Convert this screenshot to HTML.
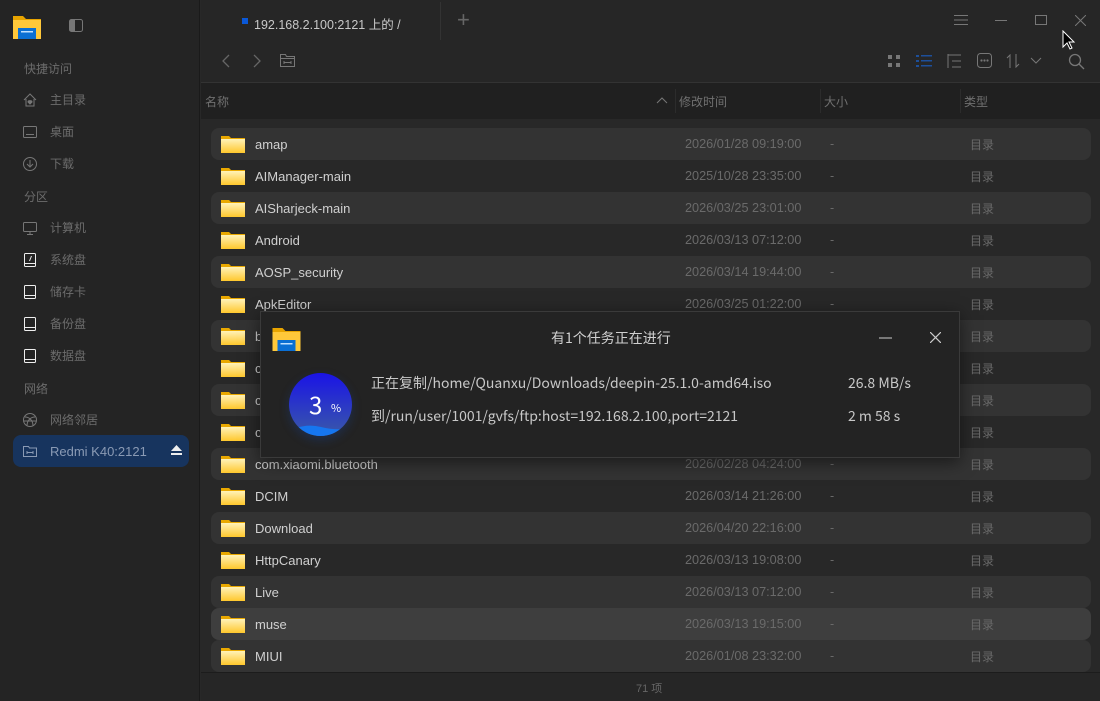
<!DOCTYPE html>
<html><head><meta charset="utf-8"><style>
*{margin:0;padding:0;box-sizing:border-box}
body{width:1100px;height:701px;overflow:hidden;background:#282828;font-family:"Liberation Sans","Noto Sans CJK SC",sans-serif;position:relative;color:#c8c8c8}
.side{position:absolute;left:0;top:0;width:200px;height:701px;background:#242424;border-right:1px solid #1a1a1a}
.sec{position:absolute;left:24px;font-size:12px;color:#6c6c6c}
.it{position:absolute;left:22px;font-size:12px;color:#6c6c6c;display:flex;align-items:center}
.it svg{margin-right:12px}
.abs{position:absolute}
.hdr{position:absolute;left:201px;top:82px;width:899px;height:37px;background:#202020;border-top:1px solid #333;font-size:12px;color:#707070}
.row{position:absolute;left:211px;width:880px;height:32px;border-radius:8px;font-size:12.5px}
.row.s{background:#333}
.row.h{background:#3e3e3e}
.fold{position:absolute;left:10px;top:7px;width:24px;height:18px}
.nm{position:absolute;left:44px;top:9px;color:#d0d0d0;font-size:13px}
.dt{position:absolute;left:474px;top:9px;color:#6a6a6a;font-size:12.7px}
.sz{position:absolute;left:619px;top:9px;color:#6a6a6a}
.tp{position:absolute;left:759px;top:8px;color:#6a6a6a;font-size:12px}
.dl{font-family:"Noto Sans CJK SC","Liberation Sans",sans-serif;line-height:1}
</style></head><body>
<div class="side">
 <svg class="abs" style="left:13px;top:14px" width="28" height="25" viewBox="0 0 28 25"><path d="M0 2h10l3 3h15v20H0z" fill="#e8a400"/><rect x="0" y="6" width="28" height="19" fill="#ffc83a"/><rect x="5" y="14" width="18" height="11" fill="#0a6fd4"/><rect x="8" y="17" width="12" height="1.5" fill="#bfe0ff"/></svg>
 <svg class="abs" style="left:69px;top:19px" width="14" height="13"><rect x="0.5" y="0.5" width="13" height="12" rx="2" fill="none" stroke="#777"/><rect x="1" y="1" width="5" height="11" fill="#777"/></svg>
 <div class="sec" style="top:60px">快捷访问</div>
 <div class="it" style="top:91px"><svg width="16" height="16" viewBox="0 0 16 16" fill="none" stroke="#777"><path d="M2 8l6-6 6 6M4 7v7h8V7"/><path d="M8 12l-2-2a1.2 1.2 0 0 1 2-1 1.2 1.2 0 0 1 2 1z" fill="#777"/></svg>主目录</div>
 <div class="it" style="top:123px"><svg width="16" height="16" viewBox="0 0 16 16" fill="none" stroke="#777"><rect x="1.5" y="2.5" width="13" height="11" rx="1"/><path d="M4 10.5h8"/></svg>桌面</div>
 <div class="it" style="top:155px"><svg width="16" height="16" viewBox="0 0 16 16" fill="none" stroke="#777"><circle cx="8" cy="8" r="6.5"/><path d="M8 4v6M5 8l3 3 3-3"/></svg>下载</div>
 <div class="sec" style="top:188px">分区</div>
 <div class="it" style="top:219px"><svg width="16" height="16" viewBox="0 0 16 16" fill="none" stroke="#777"><rect x="1.5" y="2.5" width="13" height="9" rx="1"/><path d="M5 14.5h6M8 11.5v3"/></svg>计算机</div>
 <div class="it" style="top:251px"><svg width="16" height="16" viewBox="0 0 16 16" fill="none" stroke="#eee"><rect x="2.5" y="1.5" width="11" height="13" rx="1"/><path d="M2.5 11.5h11M9.5 4l-2 5"/></svg>系统盘</div>
 <div class="it" style="top:283px"><svg width="16" height="16" viewBox="0 0 16 16" fill="none" stroke="#eee"><rect x="2.5" y="1.5" width="11" height="13" rx="1"/><path d="M2.5 11.5h11"/></svg>储存卡</div>
 <div class="it" style="top:315px"><svg width="16" height="16" viewBox="0 0 16 16" fill="none" stroke="#eee"><rect x="2.5" y="1.5" width="11" height="13" rx="1"/><path d="M2.5 11.5h11"/></svg>备份盘</div>
 <div class="it" style="top:347px"><svg width="16" height="16" viewBox="0 0 16 16" fill="none" stroke="#eee"><rect x="2.5" y="1.5" width="11" height="13" rx="1"/><path d="M2.5 11.5h11"/></svg>数据盘</div>
 <div class="sec" style="top:380px">网络</div>
 <div class="it" style="top:411px"><svg width="16" height="16" viewBox="0 0 16 16" fill="none" stroke="#777"><circle cx="8" cy="8" r="6.5"/><path d="M3 5c4 0 8 3 8 9M13 5c-4 0-8 3-8 9M2 9h12"/></svg>网络邻居</div>
 <div class="abs" style="left:13px;top:435px;width:176px;height:32px;background:#17345e;border-radius:8px"></div>
 <div class="it" style="top:443px;color:#8a9ab4;font-size:13px"><svg width="16" height="16" viewBox="0 0 16 16" fill="none" stroke="#8a9ab4"><path d="M1.5 3.5h5l1 1.5h7v8.5h-13z"/><path d="M5 9.5h6M5 8v3M11 8v3"/></svg>Redmi K40:2121</div>
 <svg class="abs" style="left:171px;top:445px" width="11" height="10"><path d="M5.5 0L11 6H0z" fill="#eee"/><rect y="8" width="11" height="2" fill="#eee"/></svg>
</div>
<div class="abs" style="left:201px;top:0;width:899px;height:82px;background:#262626"></div>
<div class="abs" style="left:242px;top:18px;width:6px;height:6px;background:#0a58d8"></div>
<div class="abs" style="left:254px;top:14px;font-size:12.5px;color:#c8c8c8">192.168.2.100:2121 上的 /</div>
<div class="abs" style="left:440px;top:2px;width:1px;height:38px;background:#333"></div>
<div class="abs" style="left:457px;top:7px;font-size:22px;color:#666;font-weight:300">+</div>
<svg class="abs" style="left:954px;top:14px" width="14" height="12" stroke="#777"><path d="M0 1.5h14M0 6h14M0 10.5h14"/></svg>
<svg class="abs" style="left:995px;top:14px" width="12" height="12" stroke="#777"><path d="M0 6.5h12"/></svg>
<svg class="abs" style="left:1035px;top:15px" width="12" height="10" fill="none" stroke="#777"><rect x=".5" y=".5" width="11" height="9"/></svg>
<svg class="abs" style="left:1075px;top:15px" width="11" height="11" stroke="#777"><path d="M0 0l11 11M11 0L0 11"/></svg>
<svg class="abs" style="left:1062px;top:30px" width="14" height="22"><path d="M1 1v16l4-4 3 6 2-1-3-6h5z" fill="#000" stroke="#fff"/></svg>
<svg class="abs" style="left:221px;top:54px" width="10" height="14" fill="none" stroke="#666" stroke-width="1.3"><path d="M8 1L2 7l6 6"/></svg>
<svg class="abs" style="left:252px;top:54px" width="10" height="14" fill="none" stroke="#666" stroke-width="1.3"><path d="M2 1l6 6-6 6"/></svg>
<svg class="abs" style="left:280px;top:54px" width="15" height="13" fill="none" stroke="#777"><path d="M.5 .5h5l1 2h8v10H.5z M.5 4.5h14"/><path d="M4 8.5h7M4 7v3M11 7v3"/></svg>
<svg class="abs" style="left:888px;top:55px" width="12" height="12" fill="#777"><rect width="4" height="4"/><rect x="8" width="4" height="4"/><rect y="8" width="4" height="4"/><rect x="8" y="8" width="4" height="4"/></svg>
<svg class="abs" style="left:916px;top:55px" width="16" height="12" fill="#1d4f9a"><rect width="3" height="2"/><rect x="5" width="11" height="1.5"/><rect y="5" width="3" height="2"/><rect x="5" y="5" width="11" height="1.5"/><rect y="10" width="3" height="2"/><rect x="5" y="10" width="11" height="1.5"/></svg>
<svg class="abs" style="left:947px;top:54px" width="15" height="14" fill="none" stroke="#777"><path d="M1 0v14M1 1h13M5 7h9M5 13h9"/></svg>
<svg class="abs" style="left:977px;top:53px" width="15" height="15" fill="none" stroke="#777"><rect x=".5" y=".5" width="14" height="14" rx="3"/><circle cx="4.5" cy="7.5" r=".6" fill="#777"/><circle cx="7.5" cy="7.5" r=".6" fill="#777"/><circle cx="10.5" cy="7.5" r=".6" fill="#777"/></svg>
<svg class="abs" style="left:1006px;top:54px" width="14" height="14" fill="none" stroke="#777"><path d="M4 14V1L1 4M10 0v13l3-3"/></svg>
<svg class="abs" style="left:1030px;top:57px" width="12" height="7" fill="none" stroke="#777"><path d="M1 1l5 5 5-5"/></svg>
<svg class="abs" style="left:1068px;top:53px" width="17" height="17" fill="none" stroke="#777" stroke-width="1.3"><circle cx="7" cy="7" r="5.5"/><path d="M11 11l5 5"/></svg>
<div class="hdr">
 <div class="abs" style="left:4px;top:10px">名称</div>
 <svg class="abs" style="left:455px;top:14px" width="12" height="7" fill="none" stroke="#777"><path d="M1 6l5-5 5 5"/></svg>
 <div class="abs" style="left:474px;top:6px;width:1px;height:24px;background:#2c2c2c"></div>
 <div class="abs" style="left:478px;top:10px">修改时间</div>
 <div class="abs" style="left:619px;top:6px;width:1px;height:24px;background:#2c2c2c"></div>
 <div class="abs" style="left:623px;top:10px">大小</div>
 <div class="abs" style="left:759px;top:6px;width:1px;height:24px;background:#2c2c2c"></div>
 <div class="abs" style="left:763px;top:10px">类型</div>
</div>
<div id="rows"></div>
<div class="abs" style="left:201px;top:672px;width:899px;height:29px;background:#262626;border-top:1px solid #1c1c1c"></div>
<div class="abs" style="left:636px;top:680px;font-size:11px;color:#666">71 项</div>
<div class="abs dl" style="left:260px;top:311px;width:700px;height:147px;background:#232323;border:1px solid #3a3a3a;box-shadow:0 4px 16px rgba(0,0,0,.5)">
 <svg class="abs" style="left:11px;top:14px" width="29" height="25" viewBox="0 0 28 25"><path d="M0 2h10l3 3h15v20H0z" fill="#e8a400"/><rect x="0" y="6" width="28" height="19" fill="#ffc83a"/><rect x="5" y="14" width="18" height="11" fill="#0a6fd4"/><rect x="8" y="17" width="12" height="1.5" fill="#bfe0ff"/></svg>
 <div class="abs" style="left:290px;top:19px;font-size:14px;color:#d0d0d0">有1个任务正在进行</div>
 <svg class="abs" style="left:618px;top:25px" width="13" height="2" stroke="#ccc"><path d="M0 1h13"/></svg>
 <svg class="abs" style="left:669px;top:20px" width="11" height="11" stroke="#ccc" stroke-width="1.2"><path d="M0 0l11 11M11 0L0 11"/></svg>
 <div class="abs" style="left:28px;top:61px;width:63px;height:63px;border-radius:50%;background:linear-gradient(#1a13e6,#3a5aa8);overflow:hidden;box-shadow:0 4px 10px rgba(20,80,200,.25)">
  <svg class="abs" style="left:0;top:50px" width="63" height="14"><path d="M0 8 Q16 0 32 4 T63 5V14H0z" fill="#1676f0"/></svg>
  <div class="abs" style="left:20px;top:19px;font-size:24px;color:#fff">3</div>
  <div class="abs" style="left:42px;top:30px;font-size:11px;color:#fff">%</div>
 </div>
 <div class="abs" style="left:110px;top:64px;font-size:14px;color:#c8c8c8">正在复制/home/Quanxu/Downloads/deepin-25.1.0-amd64.iso</div>
 <div class="abs" style="left:587px;top:64px;font-size:14px;color:#c8c8c8">26.8 MB/s</div>
 <div class="abs" style="left:110px;top:97px;font-size:14px;color:#c8c8c8">到/run/user/1001/gvfs/ftp:host=192.168.2.100,port=2121</div>
 <div class="abs" style="left:587px;top:97px;font-size:14px;color:#c8c8c8">2 m 58 s</div>
</div>
<script>
var d=[["amap","2026/01/28 09:19:00"],["AIManager-main","2025/10/28 23:35:00"],["AISharjeck-main","2026/03/25 23:01:00"],["Android","2026/03/13 07:12:00"],["AOSP_security","2026/03/14 19:44:00"],["ApkEditor","2026/03/25 01:22:00"],["bin","2026/03/13 07:12:00"],["cache","2026/03/13 07:12:00"],["com","2026/03/13 07:12:00"],["config","2026/03/13 07:12:00"],["com.xiaomi.bluetooth","2026/02/28 04:24:00"],["DCIM","2026/03/14 21:26:00"],["Download","2026/04/20 22:16:00"],["HttpCanary","2026/03/13 19:08:00"],["Live","2026/03/13 07:12:00"],["muse","2026/03/13 19:15:00"],["MIUI","2026/01/08 23:32:00"]];
var h="",f='<svg class="fold" viewBox="0 0 24 18"><path d="M0 1h8l2 2h14v15H0z" fill="#e9a800"/><rect y="4" width="24" height="14" fill="url(#g)"/></svg>';
d.forEach(function(r,i){var c=i==15?"h":(i%2==0?"s":"");h+='<div class="row '+c+'" style="top:'+(128+i*32)+'px">'+f+'<div class="nm">'+r[0]+'</div><div class="dt">'+r[1]+'</div><div class="sz">-</div><div class="tp">目录</div></div>';});
document.getElementById("rows").innerHTML='<svg width="0" height="0" style="position:absolute"><defs><linearGradient id="g" x1="0" y1="0" x2="0" y2="1"><stop offset="0" stop-color="#fff2b8"/><stop offset="1" stop-color="#ffc72c"/></linearGradient></defs></svg>'+h;
</script>
</body></html>
